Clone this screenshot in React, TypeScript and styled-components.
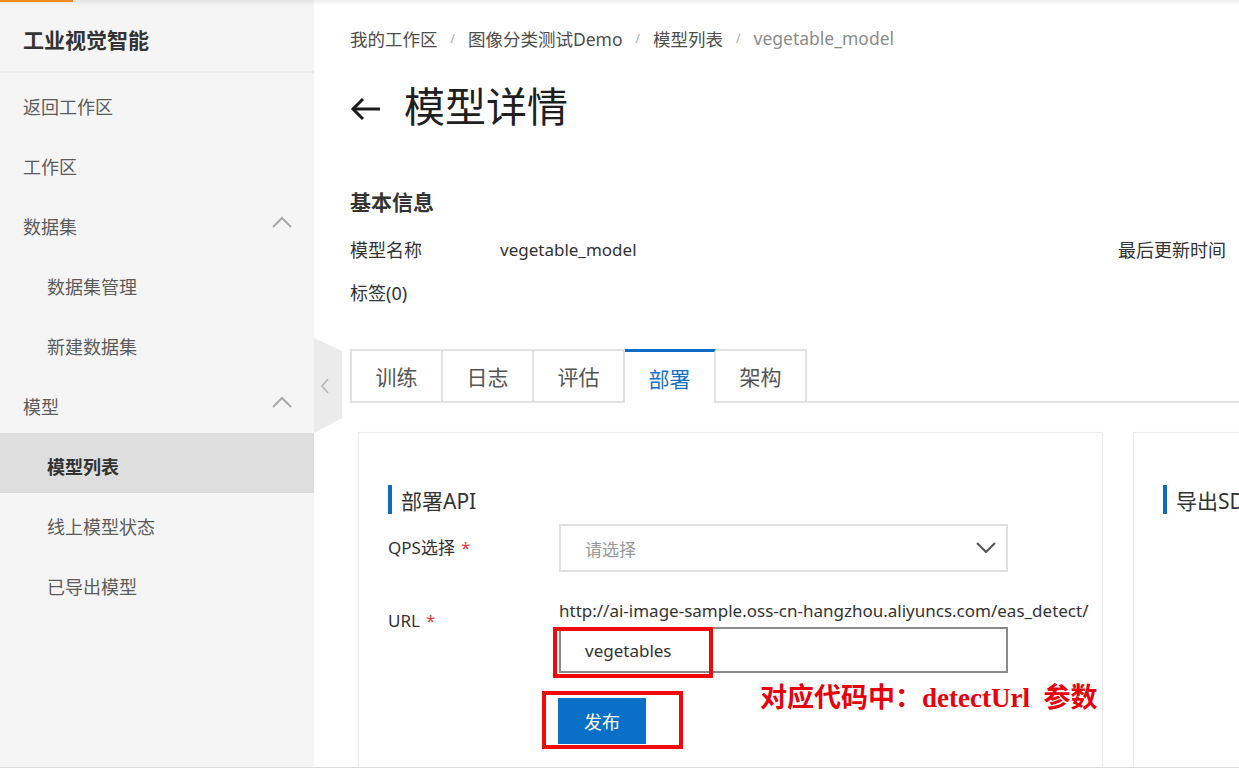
import React from "react";
import styled, { createGlobalStyle } from "styled-components";

const GlobalStyle = createGlobalStyle`
  html, body { margin: 0; padding: 0; background: #fff; }
  body {
    font-family: "Noto Sans", "Noto Sans CJK SC", sans-serif;
    color: #333;
  }
  * { box-sizing: border-box; }
`;

const Page = styled.div`
  position: relative;
  width: 1239px;
  height: 775px;
  overflow: hidden;
  background: #fff;
`;

const TopShade = styled.div`
  position: absolute;
  left: 0;
  top: 0;
  right: 0;
  height: 6px;
  background: linear-gradient(rgba(0, 0, 0, 0.07), rgba(0, 0, 0, 0));
  z-index: 5;
  pointer-events: none;
`;

const OrangeBar = styled.div`
  position: absolute;
  left: 0;
  top: 0;
  width: 73px;
  height: 2px;
  background: #ef8a1c;
  z-index: 6;
`;

const Body = styled.div`
  display: flex;
  height: 768px;
  border-bottom: 1px solid #dcdcdc;
`;

const Sidebar = styled.aside`
  position: relative;
  flex: 0 0 314px;
  background: #f5f5f5;
  z-index: 2;
`;

const Brand = styled.div`
  height: 73px;
  padding: 6px 0 0 23px;
  display: flex;
  align-items: center;
  font-size: 21px;
  font-weight: 700;
  color: #333;
  border-bottom: 2px solid #e9e9e9;
`;

const Menu = styled.nav`
  display: flex;
  flex-direction: column;
`;

const MenuItem = styled.div<{ $sub?: boolean; $active?: boolean }>`
  height: 60px;
  padding: 6px 22px 0 ${(p) => (p.$sub ? 47 : 23)}px;
  display: flex;
  align-items: center;
  justify-content: space-between;
  font-size: 18px;
  color: ${(p) => (p.$active ? "#333" : "#5c5c5c")};
  font-weight: ${(p) => (p.$active ? 700 : 400)};
  background: ${(p) => (p.$active ? "#dedede" : "transparent")};
`;

const Caret = styled.svg`
  width: 20px;
  height: 12px;
  margin-top: -8px;
`;

const CollapseHandle = styled.div`
  position: absolute;
  left: 100%;
  top: 338px;
  width: 28px;
  height: 95px;
  display: flex;
  align-items: center;
  justify-content: center;
  padding-right: 6px;
`;

const HandleShape = styled.svg`
  position: absolute;
  inset: 0;
`;

const HandleArrow = styled.svg`
  position: relative;
  width: 10px;
  height: 16px;
`;

const Main = styled.main`
  flex: 1;
  min-width: 0;
  overflow: hidden;
  padding: 26px 0 0 36px;
`;

const Content = styled.div`
  width: 1500px;
`;

const Breadcrumb = styled.div`
  display: flex;
  align-items: center;
  height: 24px;
  font-size: 17.5px;
  color: #4d4d4d;
`;

const Crumb = styled.span<{ $current?: boolean }>`
  color: ${(p) => (p.$current ? "#8c8c8c" : "#4d4d4d")};
`;

const Sep = styled.span`
  margin: 0 13px;
  font-size: 12px;
  color: #aaa;
`;

const TitleRow = styled.div`
  display: flex;
  align-items: center;
  height: 50px;
  margin-top: 31px;
`;

const BackArrow = styled.svg`
  width: 32px;
  height: 24px;
  margin-right: 22px;
  margin-top: 6px;
`;

const Title = styled.h1`
  margin: 0;
  font-size: 41px;
  font-weight: 400;
  color: #1f1f1f;
  line-height: 50px;
`;

const SectionTitle = styled.h2`
  margin: 57px 0 0;
  font-size: 21px;
  font-weight: 700;
  color: #333;
  line-height: 28px;
`;

const InfoGrid = styled.div`
  display: grid;
  grid-template-columns: 150px 618px auto;
  row-gap: 15px;
  margin-top: 20px;
  font-size: 18px;
  line-height: 28px;
  color: #333;
`;

const InfoValue = styled.span`
  font-size: 17px;
`;

const Tabs = styled.div`
  display: flex;
  margin-top: 42px;
  border-bottom: 2px solid #e2e2e2;
`;

const Tab = styled.div<{ $active?: boolean; $first?: boolean }>`
  width: ${(p) => (p.$first ? 93 : 91)}px;
  height: ${(p) => (p.$active ? 54 : 52)}px;
  margin-bottom: ${(p) => (p.$active ? -2 : 0)}px;
  display: flex;
  align-items: center;
  justify-content: center;
  font-size: 21px;
  background: #fff;
  color: ${(p) => (p.$active ? "#1670c4" : "#555")};
  border-top: ${(p) => (p.$active ? "3px solid #0b6cc4" : "2px solid #e2e2e2")};
  border-right: 2px solid #e2e2e2;
  border-left: ${(p) => (p.$first ? "2px solid #e2e2e2" : "0")};
`;

const Cards = styled.div`
  display: flex;
  gap: 30px;
  margin: 29px 0 0 8px;
`;

const Card = styled.section`
  width: 745px;
  height: 340px;
  flex: 0 0 auto;
  border: 1px solid #ececec;
  box-shadow: 0 0 2px rgba(0, 0, 0, 0.04);
  padding: 52px 0 0 29px;
`;

const CardHeader = styled.div`
  display: flex;
  align-items: center;
  height: 29px;
  font-size: 21px;
  color: #333;
  &::before {
    content: "";
    width: 4px;
    height: 29px;
    background: #0b6cc4;
    margin-right: 9px;
  }
`;

const FormRow = styled.div<{ $top?: number }>`
  display: flex;
  align-items: flex-start;
  margin-top: ${(p) => p.$top ?? 0}px;
`;

const Label = styled.div<{ $pad?: number }>`
  width: 171px;
  flex: 0 0 171px;
  font-size: 17px;
  line-height: 24px;
  padding-top: ${(p) => p.$pad ?? 0}px;
  color: #333;
`;

const Req = styled.span`
  color: #e6413a;
  margin-left: 6px;
`;

const Select = styled.div`
  width: 449px;
  height: 48px;
  border: 2px solid #e0e0e0;
  display: flex;
  align-items: center;
  justify-content: space-between;
  padding: 0 10px 0 24px;
  font-size: 17px;
  color: #999;
`;

const SelectCaret = styled.svg`
  width: 20px;
  height: 12px;
`;

const UrlField = styled.div`
  display: flex;
  flex-direction: column;
`;

const UrlPrefix = styled.div`
  font-size: 17px;
  line-height: 24px;
  color: #333;
  height: 28px;
  white-space: nowrap;
`;

const InputWrap = styled.div`
  position: relative;
  width: 449px;
  height: 46px;
`;

const Input = styled.div`
  width: 100%;
  height: 100%;
  border: 2px solid #8a8a8a;
  display: flex;
  align-items: center;
  padding-left: 24px;
  font-size: 17px;
  color: #333;
`;

const Highlight = styled.div<{ $l: number; $t: number; $w: number; $h: number }>`
  position: absolute;
  left: ${(p) => p.$l}px;
  top: ${(p) => p.$t}px;
  width: ${(p) => p.$w}px;
  height: ${(p) => p.$h}px;
  border: 4px solid #f20a0a;
  pointer-events: none;
`;

const ButtonRow = styled.div`
  position: relative;
  margin: 25px 0 0 171px;
  height: 46px;
`;

const PrimaryButton = styled.button`
  width: 88px;
  height: 46px;
  border: 0;
  background: #0a6fc7;
  color: #fff;
  font-family: inherit;
  font-size: 18px;
  padding: 0;
  margin-left: -1px;
`;

const Annotation = styled.div`
  position: absolute;
  left: 201px;
  top: -16px;
  white-space: nowrap;
  font-family: "Liberation Serif", "Noto Sans CJK SC", serif;
  font-weight: 700;
  font-size: 27px;
  line-height: 32px;
  color: #e8000b;
`;

const CaretUp = () => (
  <Caret viewBox="0 0 20 12">
    <polyline points="1,11 10,2 19,11" fill="none" stroke="#a8a8a8" strokeWidth="2" />
  </Caret>
);

export default function App() {
  return (
    <>
      <GlobalStyle />
      <Page>
        <TopShade />
        <OrangeBar />
        <Body>
          <Sidebar>
            <Brand>工业视觉智能</Brand>
            <Menu>
              <MenuItem>返回工作区</MenuItem>
              <MenuItem>工作区</MenuItem>
              <MenuItem>
                数据集
                <CaretUp />
              </MenuItem>
              <MenuItem $sub>数据集管理</MenuItem>
              <MenuItem $sub>新建数据集</MenuItem>
              <MenuItem>
                模型
                <CaretUp />
              </MenuItem>
              <MenuItem $sub $active>
                模型列表
              </MenuItem>
              <MenuItem $sub>线上模型状态</MenuItem>
              <MenuItem $sub>已导出模型</MenuItem>
            </Menu>
            <CollapseHandle>
              <HandleShape viewBox="0 0 28 95" preserveAspectRatio="none">
                <polygon points="0,0 28,13 28,80 0,95" fill="#ebebeb" />
              </HandleShape>
              <HandleArrow viewBox="0 0 10 16">
                <polyline points="8,1 2,8 8,15" fill="none" stroke="#b5b5b5" strokeWidth="1.6" />
              </HandleArrow>
            </CollapseHandle>
          </Sidebar>
          <Main>
            <Content>
              <Breadcrumb>
                <Crumb>我的工作区</Crumb>
                <Sep>/</Sep>
                <Crumb>图像分类测试Demo</Crumb>
                <Sep>/</Sep>
                <Crumb>模型列表</Crumb>
                <Sep>/</Sep>
                <Crumb $current>vegetable_model</Crumb>
              </Breadcrumb>
              <TitleRow>
                <BackArrow viewBox="0 0 32 24">
                  <line x1="3" y1="12" x2="30" y2="12" stroke="#1a1a1a" strokeWidth="3" />
                  <polyline points="13,2 3,12 13,22" fill="none" stroke="#1a1a1a" strokeWidth="3" />
                </BackArrow>
                <Title>模型详情</Title>
              </TitleRow>
              <SectionTitle>基本信息</SectionTitle>
              <InfoGrid>
                <span>模型名称</span>
                <InfoValue>vegetable_model</InfoValue>
                <span>最后更新时间</span>
                <span>标签(0)</span>
              </InfoGrid>
              <Tabs>
                <Tab $first>训练</Tab>
                <Tab>日志</Tab>
                <Tab>评估</Tab>
                <Tab $active>部署</Tab>
                <Tab>架构</Tab>
              </Tabs>
              <Cards>
                <Card>
                  <CardHeader>部署API</CardHeader>
                  <FormRow $top={10}>
                    <Label $pad={12}>
                      QPS选择<Req>*</Req>
                    </Label>
                    <Select>
                      请选择
                      <SelectCaret viewBox="0 0 20 12">
                        <polyline points="1,1 10,10 19,1" fill="none" stroke="#555" strokeWidth="2" />
                      </SelectCaret>
                    </Select>
                  </FormRow>
                  <FormRow $top={27}>
                    <Label $pad={10}>
                      URL<Req>*</Req>
                    </Label>
                    <UrlField>
                      <UrlPrefix>http://ai-image-sample.oss-cn-hangzhou.aliyuncs.com/eas_detect/</UrlPrefix>
                      <InputWrap>
                        <Input>vegetables</Input>
                        <Highlight $l={-6} $t={0} $w={160} $h={51} />
                      </InputWrap>
                    </UrlField>
                  </FormRow>
                  <ButtonRow>
                    <PrimaryButton>发布</PrimaryButton>
                    <Highlight $l={-17} $t={-7} $w={141} $h={58} />
                    <Annotation>对应代码中：detectUrl&nbsp;&nbsp;参数</Annotation>
                  </ButtonRow>
                </Card>
                <Card>
                  <CardHeader>导出SDK</CardHeader>
                </Card>
              </Cards>
            </Content>
          </Main>
        </Body>
      </Page>
    </>
  );
}
